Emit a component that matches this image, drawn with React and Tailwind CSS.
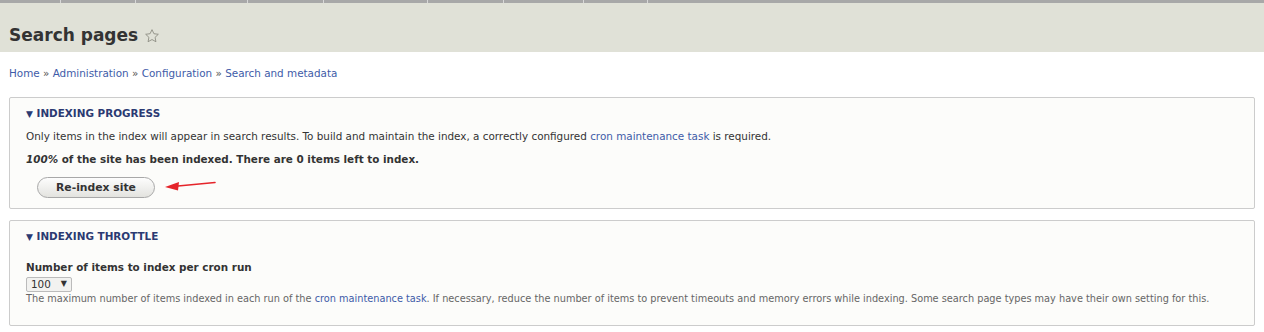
export default function App() {
  const tabs = [60, 135, 247, 323, 427, 503, 583, 647]
  return (
    <div className="min-h-[332px] bg-white text-[#333]" style={{ fontFamily: '"DejaVu Sans", sans-serif' }}>
      <div className="bg-[#e0e1d7]">
        <div className="relative h-[3px] bg-[#a8a8a8]">
          {tabs.map((x) => (
            <span key={x} className="absolute top-0 h-[3px] w-px bg-[#d8d8d8]" style={{ left: x }} />
          ))}
        </div>
        <div className="flex h-[49px] items-center px-[9px] pt-[16px]">
          <h1 className="text-[17px] font-bold text-[#333]">Search pages</h1>
          <svg className="ml-[6px] mt-[1px]" width="16" height="16" viewBox="0 0 24 24" fill="none" stroke="#8a8a80" strokeWidth="1.3" strokeLinejoin="round">
            <path d="M12 2.5l2.9 6.1 6.6.8-4.9 4.6 1.3 6.6L12 17.3l-5.9 3.3 1.3-6.6-4.9-4.6 6.6-.8z" />
          </svg>
        </div>
      </div>

      <div className="px-[9px] pt-[14px] text-[10.4px] text-[#3e5ba8]">
        <a>Home</a> <span className="text-[#555]">»</span> <a>Administration</a> <span className="text-[#555]">»</span> <a>Configuration</a> <span className="text-[#555]">»</span> <a>Search and metadata</a>
      </div>

      <div className="px-[9px] pt-[15px] text-[10.4px]">
        <fieldset className="h-[112px] rounded-[2px] border border-[#ccc] bg-[#fcfcfa] px-[16px] pt-[8px]">
          <div className="font-bold uppercase text-[#2b3a72]"><span className="text-[9px]">▼</span> Indexing progress</div>
          <p className="mt-[8px]">
            Only items in the index will appear in search results. To build and maintain the index, a correctly configured{' '}
            <a className="text-[#3e5ba8]">cron maintenance task</a> is required.
          </p>
          <p className="mt-[7px] font-bold">
            <em>100%</em> of the site has been indexed. There are 0 items left to index.
          </p>
          <div className="mt-[10px] flex items-center pl-[11px]">
            <button className="h-[21px] w-[118px] rounded-full border border-[#a8a8a8] bg-gradient-to-b from-[#fdfdfd] to-[#e3e3df] text-[10.8px] font-bold text-[#333]">
              Re-index site
            </button>
            <svg className="ml-[9px] -mt-[3px]" width="54" height="12" viewBox="0 0 54 12">
              <line x1="14" y1="6" x2="51" y2="2.5" stroke="#e5242a" strokeWidth="1.6" strokeLinecap="round" />
              <path d="M1 7 L15 2 L14 10.5 Z" fill="#e5242a" />
            </svg>
          </div>
        </fieldset>

        <fieldset className="mt-[11px] h-[106px] rounded-[2px] border border-[#ccc] bg-[#fcfcfa] px-[16px] pt-[8px]">
          <div className="font-bold uppercase text-[#2b3a72]"><span className="text-[9px]">▼</span> Indexing throttle</div>
          <div className="mt-[16px] font-bold">Number of items to index per cron run</div>
          <div className="mt-[1px] flex h-[15px] w-[46px] items-center justify-between rounded-[2px] border border-[#bbb] bg-[#f2f2f0] px-[4px]">
            <span>100</span>
            <span className="text-[8px]">▼</span>
          </div>
          <p className="text-[9.75px] text-[#666]">
            The maximum number of items indexed in each run of the <a className="text-[#3e5ba8]">cron maintenance task</a>. If necessary, reduce the number of items to prevent timeouts and memory errors while indexing. Some search page types may have their own setting for this.
          </p>
        </fieldset>
      </div>
    </div>
  )
}
